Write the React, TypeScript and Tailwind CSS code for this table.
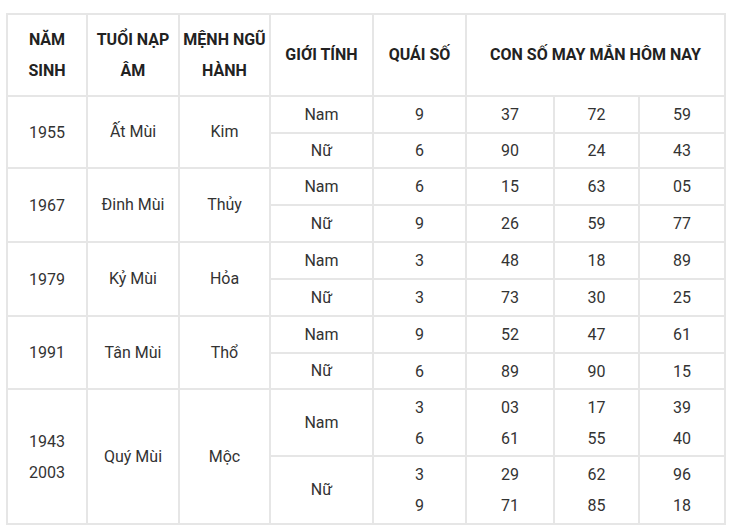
const rows = [
  {
    year: ["1955"],
    tuoi: "Ất Mùi",
    menh: "Kim",
    h: ["h-[37px]", "h-[35px]"],
    sub: [
      { g: "Nam", q: ["9"], n: [["37"], ["72"], ["59"]] },
      { g: "Nữ", q: ["6"], n: [["90"], ["24"], ["43"]] },
    ],
  },
  {
    year: ["1967"],
    tuoi: "Đinh Mùi",
    menh: "Thủy",
    h: ["h-[37px]", "h-[37px]"],
    sub: [
      { g: "Nam", q: ["6"], n: [["15"], ["63"], ["05"]] },
      { g: "Nữ", q: ["9"], n: [["26"], ["59"], ["77"]] },
    ],
  },
  {
    year: ["1979"],
    tuoi: "Kỷ Mùi",
    menh: "Hỏa",
    h: ["h-[37px]", "h-[37px]"],
    sub: [
      { g: "Nam", q: ["3"], n: [["48"], ["18"], ["89"]] },
      { g: "Nữ", q: ["3"], n: [["73"], ["30"], ["25"]] },
    ],
  },
  {
    year: ["1991"],
    tuoi: "Tân Mùi",
    menh: "Thổ",
    h: ["h-[37px]", "h-[36px]"],
    sub: [
      { g: "Nam", q: ["9"], n: [["52"], ["47"], ["61"]] },
      { g: "Nữ", q: ["6"], n: [["89"], ["90"], ["15"]] },
    ],
  },
  {
    year: ["1943", "2003"],
    tuoi: "Quý Mùi",
    menh: "Mộc",
    h: ["h-[67px]", "h-[68px]"],
    sub: [
      { g: "Nam", q: ["3", "6"], n: [["03", "61"], ["17", "55"], ["39", "40"]] },
      { g: "Nữ", q: ["3", "9"], n: [["29", "71"], ["62", "85"], ["96", "18"]] },
    ],
  },
]

const cell = "border-2 border-[#e6e6e6] text-center align-middle p-0"

const Lines = ({ items }: { items: string[] }) => (
  <>
    {items.map((t, i) => (
      <div key={i} className="leading-[31px]">
        {t}
      </div>
    ))}
  </>
)

const App = () => {
  return (
    <div className="bg-white w-[730px] h-[531px] pl-[6px] pt-[13px] font-['Roboto',sans-serif]">
      <table className="table-fixed border-collapse w-[718px] text-[16px] text-[#333]">
        <colgroup>
          <col className="w-[80px]" />
          <col className="w-[92px]" />
          <col className="w-[91px]" />
          <col className="w-[103px]" />
          <col className="w-[93px]" />
          <col className="w-[88px]" />
          <col className="w-[85px]" />
          <col className="w-[86px]" />
        </colgroup>
        <thead>
          <tr className="h-[82px] font-bold text-[#222]">
            <th className={cell}>
              <Lines items={["NĂM", "SINH"]} />
            </th>
            <th className={cell}>
              <Lines items={["TUỔI NẠP", "ÂM"]} />
            </th>
            <th className={cell}>
              <Lines items={["MỆNH NGŨ", "HÀNH"]} />
            </th>
            <th className={cell}>GIỚI TÍNH</th>
            <th className={cell}>QUÁI SỐ</th>
            <th className={cell} colSpan={3}>
              CON SỐ MAY MẮN HÔM NAY
            </th>
          </tr>
        </thead>
        <tbody>
          {rows.map((r) =>
            r.sub.map((s, i) => (
              <tr key={r.tuoi + s.g} className={r.h[i]}>
                {i === 0 && (
                  <>
                    <td className={cell} rowSpan={2}>
                      <Lines items={r.year} />
                    </td>
                    <td className={cell} rowSpan={2}>
                      {r.tuoi}
                    </td>
                    <td className={cell} rowSpan={2}>
                      {r.menh}
                    </td>
                  </>
                )}
                <td className={cell}>{s.g}</td>
                <td className={cell}>
                  <Lines items={s.q} />
                </td>
                {s.n.map((n, j) => (
                  <td key={j} className={cell}>
                    <Lines items={n} />
                  </td>
                ))}
              </tr>
            ))
          )}
        </tbody>
      </table>
    </div>
  )
}

export default App
